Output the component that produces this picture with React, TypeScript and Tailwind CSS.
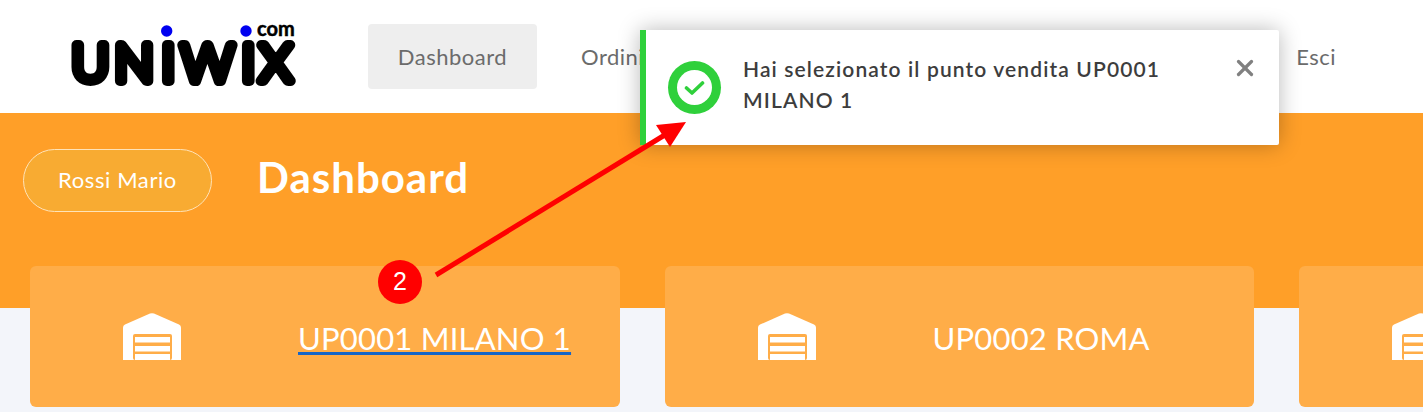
import { X } from 'lucide-react'

const cards = [
  { name: 'UP0001 MILANO 1', active: true },
  { name: 'UP0002 ROMA', active: false },
  { name: '', active: false },
]

function Logo() {
  return (
    <svg width="240" height="72" viewBox="0 0 240 72" className="block shrink-0 overflow-visible">
      <text
        y="61"
        x="6.5 49.5 96.5 116 176.5 194.5"
        fontFamily="'Lato', sans-serif"
        fontSize="52"
        fontWeight="300"
        stroke="#000"
        strokeWidth="10"
        strokeLinejoin="round"
      >
        UNIWIX
      </text>
      <circle cx="101.7" cy="11" r="5.7" fill="#0000f0" />
      <circle cx="181" cy="11" r="5.7" fill="#0000f0" />
      <text x="192" y="16" fontFamily="'Lato', sans-serif" fontSize="20" fontWeight="700" stroke="#000" strokeWidth="0.5">
        com
      </text>
    </svg>
  )
}

function GarageIcon() {
  return (
    <svg width="58" height="47" viewBox="0 0 58 47" className="block shrink-0">
      <path d="M0 47V14.5Q0 12.5 2 11.6L27 .6Q29 0 31 .6L56 11.6Q58 12.5 58 14.5V47Z" fill="#fff" />
      <rect x="10" y="21" width="39" height="26" rx="2" fill="#ffad48" />
      <rect x="12" y="24" width="35" height="5.5" fill="#fff" />
      <rect x="12" y="33" width="35" height="5.5" fill="#fff" />
      <rect x="12" y="41" width="35" height="6" fill="#fff" />
    </svg>
  )
}

export default function App() {
  return (
    <div className="relative h-[412px] w-[1423px] overflow-hidden bg-[#f3f5fa] font-['Lato',sans-serif]">
      <header className="flex h-[113px] items-start bg-white pr-[87px] pl-[65px]">
        <div className="mt-[20px]">
          <Logo />
        </div>
        <nav className="mt-[24px] ml-[63px] flex flex-1 items-center gap-[14px] text-[22px] tracking-[0.5px] text-[#6b6b6b]">
          <a className="flex h-[65px] w-[169px] items-center justify-center rounded-[4px] bg-[#eeeeee]">Dashboard</a>
          <a className="px-[30px]">Ordini</a>
          <a className="ml-auto">Esci</a>
        </nav>
      </header>

      <section className="flex h-[195px] items-start bg-[#ff9f28] pt-[36px] pl-[23px]">
        <div className="flex h-[63px] w-[189px] items-center justify-center rounded-full border border-[#ffe3b8] bg-[#f8ab32] pb-[2px] text-[22px] tracking-[0.6px] text-white">
          Rossi Mario
        </div>
        <h1 className="ml-[45px] text-[42px] leading-[56px] font-bold tracking-[1px] text-white">Dashboard</h1>
      </section>

      <section className="mt-[-42px] flex gap-[45px] pl-[30px]">
        {cards.map((card, i) => (
          <div key={i} className="flex h-[141px] w-[589.5px] shrink-0 items-center rounded-[6px] bg-[#ffad48] pl-[93px] text-white">
            <GarageIcon />
            {card.name ? (
              <span
                className={`mt-[2px] ml-[117px] text-[31px] leading-[36px] tracking-[0.2px] ${
                  card.active ? 'underline decoration-[#1666c8] decoration-[3px] underline-offset-[2px]' : ''
                }`}
              >
                {card.name}
              </span>
            ) : null}
          </div>
        ))}
      </section>

      <div className="absolute top-[30px] left-[640px] flex h-[115px] w-[639px] items-start rounded-r-[2px] border-l-[6px] border-[#2fd03b] bg-white shadow-[0_0_22px_rgba(0,0,0,0.28)]">
        <div className="mt-[31px] ml-[22px] flex h-[53px] w-[53px] shrink-0 items-center justify-center rounded-full bg-[#2fd03b]">
          <div className="flex h-[35px] w-[35px] items-center justify-center rounded-full bg-white">
            <svg width="21" height="16" viewBox="0 0 21 16">
              <path d="M2.5 8L8 13L18.5 3" fill="none" stroke="#2fd03b" strokeWidth="3.6" strokeLinecap="round" strokeLinejoin="round" />
            </svg>
          </div>
        </div>
        <p className="mt-[23px] ml-[22px] w-[440px] text-[21px] leading-[31px] font-semibold tracking-[1.12px] text-[#3d3d3d]">
          Hai selezionato il punto vendita UP0001 MILANO 1
        </p>
        <X className="mt-[25px] ml-[49px] h-[26px] w-[26px] text-[#808080]" strokeWidth={3} />
      </div>

      <svg className="absolute top-0 left-0" width="1423" height="412" viewBox="0 0 1423 412">
        <line x1="436" y1="275" x2="668" y2="133" stroke="#ff0000" strokeWidth="5" />
        <polygon points="686,122 656,125 670,147" fill="#ff0000" />
      </svg>

      <div className="absolute top-[260px] left-[378px] flex h-[44px] w-[44px] items-center justify-center rounded-full bg-[#ff0000] font-['Liberation_Sans',sans-serif] text-[25px] text-white">
        2
      </div>
    </div>
  )
}
